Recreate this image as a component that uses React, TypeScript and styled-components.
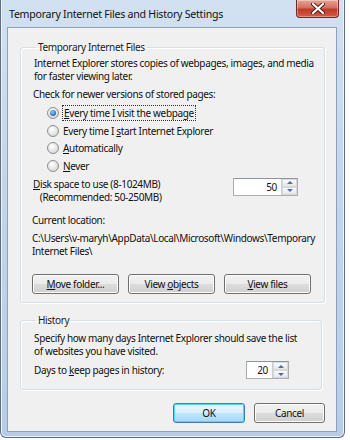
import styled, { createGlobalStyle } from 'styled-components';

const GlobalStyle = createGlobalStyle`
	body {
		margin: 0;
		background: #ffffff;
		font-family: "Noto Sans", "Open Sans", sans-serif;
	}
`

const Window = styled.div`
	width: 345px;
	height: 438px;
	box-sizing: border-box;
	display: flex;
	flex-direction: column;
	padding: 0 7px 5px 6px;
	border: 1px solid #5c6f86;
	border-top: none;
	border-radius: 0 0 6px 6px;
	background: linear-gradient(180deg, #d2e1f2 0%, #c3d6ec 40%, #b7cde7 100%);
	box-shadow: inset 1px 0 0 #eef4fb, inset -1px 0 0 #eef4fb, inset 0 -1px 0 #eef4fb;
`

const TitleBar = styled.div`
	height: 27px;
	display: flex;
	justify-content: space-between;
	flex-shrink: 0;
`

const Title = styled.span`
	align-self: center;
	padding-left: 2px;
	font-size: 10.6px;
	letter-spacing: -0.25px;
	color: #111;
`

const CloseButton = styled.div`
	width: 43px;
	height: 18px;
	margin-right: -2px;
	box-sizing: border-box;
	display: flex;
	align-items: center;
	justify-content: center;
	border: 1px solid #6d2b27;
	border-top: none;
	border-radius: 0 0 4px 4px;
	background: linear-gradient(180deg, #e6a596 0%, #d3705e 45%, #c0392b 55%, #d45a45 100%);
	box-shadow: inset 0 0 0 1px rgba(255, 255, 255, 0.35);
`

const Client = styled.div`
	flex: 1;
	display: flex;
	flex-direction: column;
	background: #f0f0f0;
	border: 1px solid #8da1b8;
	padding: 13px 11px 0 12px;
	letter-spacing: -0.35px;
`

const Group = styled.fieldset<{ $right: number; $height: number; $top: number }>`
	margin: ${p => p.$top}px ${p => p.$right}px 0 0;
	height: ${p => p.$height}px;
	box-sizing: border-box;
	padding: 0 0 0 11px;
	border: 1px solid #d5dfe5;
	border-radius: 3px;
	box-shadow: inset 1px 1px 0 #fff, 1px 1px 0 #fff;
	min-width: 0;
`

const Legend = styled.legend`
	margin-left: 4px;
	padding: 0 2px;
	font-size: 10px;
	line-height: 12px;
	color: #1a1a1a;
`

const Text = styled.div<{ $top: number; $indent?: number }>`
	margin-top: ${p => p.$top}px;
	padding-left: ${p => p.$indent || 0}px;
	font-size: 10px;
	line-height: 13px;
	color: #111;
	white-space: nowrap;
`

const RadioList = styled.div`
	margin-top: 3px;
	padding-left: 15px;
	display: flex;
	flex-direction: column;
`

const RadioRow = styled.label`
	height: 17.7px;
	display: flex;
	align-items: center;
	gap: 4px;
	font-size: 10px;
	color: #111;
`

const RadioDot = styled.span<{ $checked?: boolean }>`
	width: 12px;
	height: 12px;
	box-sizing: border-box;
	border-radius: 50%;
	border: 1px solid #8e8f8f;
	background: radial-gradient(circle at 40% 35%, #ffffff 0%, #e4e4e4 55%, #c9c9c9 100%);
	display: flex;
	align-items: center;
	justify-content: center;

	&::after {
		content: '';
		display: ${p => (p.$checked ? 'block' : 'none')};
		width: 6px;
		height: 6px;
		border-radius: 50%;
		background: radial-gradient(circle at 40% 35%, #8fd3ff 0%, #2a7cc7 60%, #10508f 100%);
	}
`

const Focus = styled.span`
	outline: 1px dotted #333;
	outline-offset: 0px;
	padding: 0 1px;
`

const SpinRow = styled.div<{ $top: number; $right: number; $align: string }>`
	margin-top: ${p => p.$top}px;
	margin-right: ${p => p.$right}px;
	display: flex;
	align-items: ${p => p.$align};
	justify-content: space-between;
`

const Spin = styled.div<{ $width: number }>`
	width: ${p => p.$width}px;
	height: 18px;
	box-sizing: border-box;
	display: flex;
	border: 1px solid #abadb3;
	border-top-color: #8f959f;
	background: #fff;
`

const SpinValue = styled.span`
	flex: 1;
	text-align: right;
	padding-right: 4px;
	font-size: 10px;
	line-height: 16px;
	color: #111;
`

const SpinArrows = styled.div`
	width: 15px;
	display: flex;
	flex-direction: column;
	border-left: 1px solid #c9ccd1;
	background: #f3f3f3;
`

const Arrow = styled.div<{ $down?: boolean }>`
	flex: 1;
	display: flex;
	align-items: center;
	justify-content: center;
	border: 1px solid #d6d8dc;
	background: linear-gradient(180deg, #fbfbfb, #e6e6e6);

	&::after {
		content: '';
		border-left: 3px solid transparent;
		border-right: 3px solid transparent;
		${p => (p.$down ? 'border-top: 3px solid #4d6fa6;' : 'border-bottom: 3px solid #4d6fa6;')}
	}
`

const ButtonRow = styled.div<{ $top: number; $right: number }>`
	margin-top: ${p => p.$top}px;
	margin-right: ${p => p.$right}px;
	display: flex;
	justify-content: flex-end;
	gap: 9px;
`

const Button = styled.div<{ $width: number; $default?: boolean }>`
	width: ${p => p.$width}px;
	height: 20px;
	box-sizing: border-box;
	display: flex;
	align-items: center;
	justify-content: center;
	font-size: 10px;
	color: #111;
	border: 1px solid ${p => (p.$default ? '#3c7fb1' : '#707070')};
	border-radius: 3px;
	background: ${p => p.$default
		? 'linear-gradient(180deg, #eaf6fd 0%, #d9f0fc 50%, #bee6fd 50%, #a7d9f5 100%)'
		: 'linear-gradient(180deg, #f2f2f2 0%, #ebebeb 50%, #dddddd 50%, #cfcfcf 100%)'};
	box-shadow: inset 0 0 0 1px ${p => (p.$default ? '#48d8fb' : '#fcfcfc')};
`

const U = styled.span`
	text-decoration: underline;
`

const CloseIcon = () => (
	<svg width="14" height="11" viewBox="0 0 14 11">
		<path d="M2 1 L12 10 M12 1 L2 10" stroke="#4a1a16" strokeWidth="4" strokeLinecap="round" />
		<path d="M2 1 L12 10 M12 1 L2 10" stroke="#ffffff" strokeWidth="2.2" strokeLinecap="round" />
	</svg>
)

const SpinBox = ({ value, width }: { value: string; width: number }) => (
	<Spin $width={width}>
		<SpinValue>{value}</SpinValue>
		<SpinArrows>
			<Arrow />
			<Arrow $down />
		</SpinArrows>
	</Spin>
)

const App = () => {
	return (
		<>
			<GlobalStyle />
			<Window>
				<TitleBar>
					<Title>Temporary Internet Files and History Settings</Title>
					<CloseButton><CloseIcon /></CloseButton>
				</TitleBar>
				<Client>
					<Group $top={0} $right={0} $height={262}>
						<Legend>Temporary Internet Files</Legend>
						<Text $top={4} $indent={2}>
							Internet Explorer stores copies of webpages, images, and media<br />
							for faster viewing later.
						</Text>
						<Text $top={5} $indent={1}>Check for newer versions of stored pages:</Text>
						<RadioList>
							<RadioRow><RadioDot $checked /><Focus><U>E</U>very time I visit the webpage</Focus></RadioRow>
							<RadioRow><RadioDot /><span>Every time I <U>s</U>tart Internet Explorer</span></RadioRow>
							<RadioRow><RadioDot /><span><U>A</U>utomatically</span></RadioRow>
							<RadioRow><RadioDot /><span><U>N</U>ever</span></RadioRow>
						</RadioList>
						<SpinRow $top={3} $right={26} $align="flex-start">
							<Text $top={0} $indent={1}>
								<U>D</U>isk space to use (8-1024MB)<br />
								&nbsp;&nbsp;&nbsp;(Recommended: 50-250MB)
							</Text>
							<SpinBox value="50" width={65} />
						</SpinRow>
						<Text $top={10}>Current location:</Text>
						<Text $top={5}>
							C:\Users\v-maryh\AppData\Local\Microsoft\Windows\Temporary<br />
							Internet Files\
						</Text>
						<ButtonRow $top={16} $right={13}>
							<Button $width={87}><span><U>M</U>ove folder...</span></Button>
							<Button $width={87}><span>View <U>o</U>bjects</span></Button>
							<Button $width={87}><span><U>V</U>iew files</span></Button>
						</ButtonRow>
					</Group>
					<Group $top={11} $right={3} $height={76}>
						<Legend>History</Legend>
						<Text $top={6} $indent={2}>
							Specify how many days Internet Explorer should save the list<br />
							of websites you have visited.
						</Text>
						<SpinRow $top={3} $right={32} $align="center">
							<Text $top={0} $indent={2}>Days to <U>k</U>eep pages in history:</Text>
							<SpinBox value="20" width={43} />
						</SpinRow>
					</Group>
					<ButtonRow $top={13} $right={0}>
						<Button $width={72} $default>OK</Button>
						<Button $width={71}>Cancel</Button>
					</ButtonRow>
				</Client>
			</Window>
		</>
	)
}

export default App;
